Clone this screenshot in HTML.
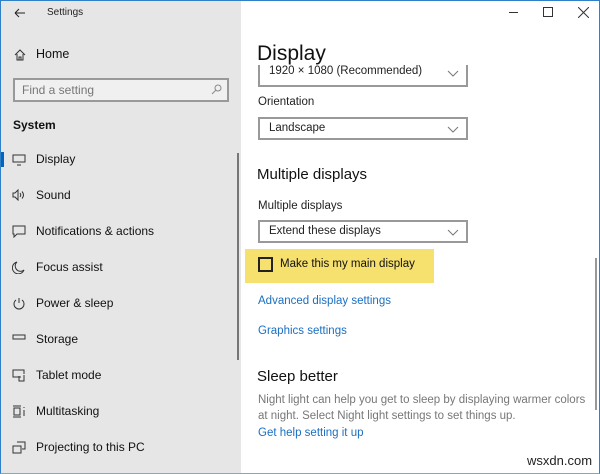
<!DOCTYPE html>
<html><head><style>
*{margin:0;padding:0;box-sizing:border-box}
body{width:600px;height:474px;overflow:hidden;font-family:"Liberation Sans",sans-serif;background:#fff;position:relative}
.frame{position:absolute;inset:0;border:1px solid #2f7fc9;border-bottom-color:#8aa;}
.side{position:absolute;left:1px;top:1px;width:240px;height:472px;background:#e6e6e6}
.a{position:absolute;white-space:nowrap}
.nav{position:absolute;left:36px;font-size:12px;color:#111}
.ic{position:absolute;left:12px}
.dd{position:absolute;left:258px;width:210px;height:23px;border:2px solid #999;background:#fff;font-size:11.5px;color:#222;padding:3px 0 0 9px}
.dd svg{position:absolute;right:7px;top:7px}
.lk{position:absolute;left:258px;font-size:11.5px;color:#1a6fc2}
</style></head><body>
<div class="side"></div>
<div class="frame"></div>
<svg class="a" style="left:14px;top:8px" width="12" height="10"><path d="M1 5H11M1 5L5 1M1 5L5 9" stroke="#222" fill="none"/></svg>
<div class="a" style="left:47px;top:7px;font-size:10px;color:#222">Settings</div>
<div class="a" style="left:509px;top:12px;width:9px;height:1px;background:#333"></div>
<div class="a" style="left:543px;top:7px;width:10px;height:10px;border:1px solid #333"></div>
<svg class="a" style="left:578px;top:7px" width="11" height="11"><path d="M0 0L11 11M11 0L0 11" stroke="#333"/></svg>

<svg class="a" style="left:14px;top:49px" width="12" height="12"><path d="M1 6L6 1L11 6M3 5V11H9V5M5 11V8H7V11" stroke="#333" fill="none"/></svg>
<div class="nav" style="top:47px;font-size:12.5px">Home</div>
<div class="a" style="left:13px;top:78px;width:216px;height:24px;border:2px solid #999;background:#f0f0f0"></div>
<div class="a" style="left:22px;top:83px;font-size:12px;color:#777">Find a setting</div>
<svg class="a" style="left:211px;top:84px" width="11" height="11"><circle cx="7" cy="4" r="3" stroke="#888" fill="none"/><path d="M5 6L1 10" stroke="#888"/></svg>
<div class="a" style="left:13px;top:118px;font-size:12px;font-weight:bold;color:#111">System</div>
<div class="a" style="left:1px;top:152px;width:3px;height:15px;background:#0067c0"></div>
<div class="a" style="left:237px;top:153px;width:2px;height:207px;background:#777"></div>
<div class="a" style="left:595px;top:258px;width:2px;height:152px;background:#999"></div>

<svg class="ic a" style="top:154px" width="14" height="12"><path d="M1 1H13V8H1ZM5 11H9" stroke="#333" fill="none"/></svg>
<div class="nav" style="top:152px">Display</div>
<svg class="ic a" style="top:189px" width="14" height="12"><path d="M1 4H3L6 1V11L3 8H1Z" stroke="#333" fill="none"/><path d="M8 4Q9.5 6 8 8M10 2.5Q13 6 10 9.5" stroke="#333" fill="none"/></svg>
<div class="nav" style="top:188px">Sound</div>
<svg class="ic a" style="top:225px" width="14" height="13"><path d="M1 1H13V9H5L2 12V9H1Z" stroke="#333" fill="none"/></svg>
<div class="nav" style="top:224px">Notifications &amp; actions</div>
<svg class="ic a" style="top:261px" width="14" height="13"><path d="M5 1A6 6 0 1 0 12 9A5 5 0 0 1 5 1Z" stroke="#333" fill="none"/></svg>
<div class="nav" style="top:260px">Focus assist</div>
<svg class="ic a" style="top:297px" width="14" height="13"><path d="M4 3A5 5 0 1 0 10 3M7 1V6" stroke="#333" fill="none"/></svg>
<div class="nav" style="top:296px">Power &amp; sleep</div>
<svg class="ic a" style="top:334px" width="14" height="6"><rect x="1" y="1" width="12" height="4" stroke="#333" fill="none"/></svg>
<div class="nav" style="top:332px">Storage</div>
<svg class="ic a" style="top:369px" width="14" height="13"><path d="M9 8H1V1H12V5M7 7V12H12V6" stroke="#333" fill="none"/></svg>
<div class="nav" style="top:368px">Tablet mode</div>
<svg class="ic a" style="top:405px" width="14" height="13"><path d="M1 1H9M1 12H9M2 3H8V10H2ZM12 2V3M12 5V11" stroke="#333" fill="none"/></svg>
<div class="nav" style="top:404px">Multitasking</div>
<svg class="ic a" style="top:441px" width="14" height="13"><path d="M5 1H13V8H10M1 5H9V12H1Z" stroke="#333" fill="none"/></svg>
<div class="nav" style="top:440px">Projecting to this PC</div>

<div class="a" style="left:257px;top:42px;font-size:21px;color:#111">Display</div>
<div class="dd" style="top:58px;height:29px;border-top:none;padding-top:7px;clip-path:inset(7px 0 0 0)">1920 × 1080 (Recommended)<svg width="12" height="7" style="top:12px"><path d="M1 1L6 6L11 1" stroke="#777" fill="none"/></svg></div>
<div class="a" style="left:258px;top:96px;font-size:11.5px;color:#222">Orientation</div>
<div class="dd" style="top:117px">Landscape<svg width="12" height="7"><path d="M1 1L6 6L11 1" stroke="#777" fill="none"/></svg></div>
<div class="a" style="left:257px;top:166px;font-size:15px;color:#111">Multiple displays</div>
<div class="a" style="left:258px;top:200px;font-size:11.5px;color:#222">Multiple displays</div>
<div class="dd" style="top:220px">Extend these displays<svg width="12" height="7"><path d="M1 1L6 6L11 1" stroke="#777" fill="none"/></svg></div>
<div class="a" style="left:245px;top:249px;width:189px;height:34px;background:#f6e06e"></div>
<div class="a" style="left:258px;top:257px;width:15px;height:15px;border:2px solid #222"></div>
<div class="a" style="left:280px;top:258px;font-size:11.5px;color:#111">Make this my main display</div>
<div class="lk" style="top:295px">Advanced display settings</div>
<div class="lk" style="top:325px">Graphics settings</div>
<div class="a" style="left:257px;top:368px;font-size:15px;color:#111">Sleep better</div>
<div class="a" style="left:258px;top:392px;font-size:11.5px;color:#777;line-height:16px">Night light can help you get to sleep by displaying warmer colors<br>at night. Select Night light settings to set things up.</div>
<div class="lk" style="top:427px">Get help setting it up</div>
<div class="a" style="left:527px;top:453px;font-size:13px;color:#222">wsxdn.com</div>
</body></html>
